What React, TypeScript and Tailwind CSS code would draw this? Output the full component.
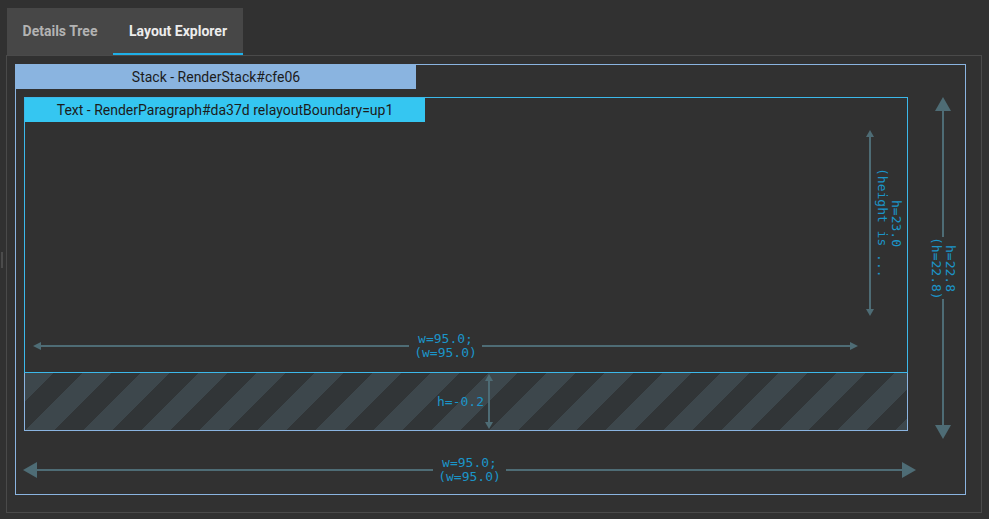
import React from "react";

const ARROW = "#4e6c75";

type Dir = "up" | "down" | "left" | "right";

function Tri({ dir, w, h }: { dir: Dir; w: number; h: number }) {
  // w = length along the arrow, h = base width
  const vertical = dir === "up" || dir === "down";
  const W = vertical ? h : w;
  const H = vertical ? w : h;
  const pts = {
    up: `${W / 2},0 ${W},${H} 0,${H}`,
    down: `0,0 ${W},0 ${W / 2},${H}`,
    left: `0,${H / 2} ${W},0 ${W},${H}`,
    right: `0,0 ${W},${H / 2} 0,${H}`,
  }[dir];
  return (
    <svg width={W} height={H} viewBox={`0 0 ${W} ${H}`} className="shrink-0 block">
      <polygon points={pts} fill={ARROW} />
    </svg>
  );
}

const measure =
  "font-['DejaVu_Sans_Mono',monospace] text-[13px] leading-[14px] text-[#1b95c9] text-center whitespace-nowrap";

function HArrow({ big, lines }: { big?: boolean; lines: string[] }) {
  const tw = big ? 14 : 8;
  const th = big ? 16 : 8;
  return (
    <div className="flex h-full w-full items-center">
      <Tri dir="left" w={tw} h={th} />
      <div className="h-[2px] flex-1 bg-[#4e6c75]" />
      <div className={`${measure} px-[5px]`}>
        {lines.map((l) => (
          <div key={l}>{l}</div>
        ))}
      </div>
      <div className="h-[2px] flex-1 bg-[#4e6c75]" />
      <Tri dir="right" w={tw} h={th} />
    </div>
  );
}

function VLine() {
  return (
    <div className="flex h-full flex-col items-center">
      <Tri dir="up" w={7} h={8} />
      <div className="w-[2px] flex-1 bg-[#4e6c75]" />
      <Tri dir="down" w={7} h={8} />
    </div>
  );
}

function BigVArrow() {
  return (
    <div className="flex h-full w-full flex-col items-center">
      <Tri dir="up" w={14} h={16} />
      <div className="w-[2px] flex-1 bg-[#4e6c75]" />
      <div className={`${measure} py-[5px] [writing-mode:vertical-rl]`}>
        <div>h=22.8</div>
        <div>(h=22.8)</div>
      </div>
      <div className="w-[2px] flex-1 bg-[#4e6c75]" />
      <Tri dir="down" w={14} h={16} />
    </div>
  );
}

export default function App() {
  return (
    <div className="flex h-[519px] w-[989px] overflow-hidden bg-[#313131] font-['Roboto',sans-serif]">
      {/* drag handle gutter */}
      <div className="flex w-[6px] shrink-0 items-center">
        <div className="ml-[1px] h-[16px] w-[2px] bg-[#4c4c4c]" />
      </div>

      <div className="flex flex-1 flex-col">
        {/* tabs */}
        <div className="ml-[1px] mt-[8px] flex h-[47px] w-fit bg-[#474747]">
          <div className="flex w-[106px] items-center justify-center text-[14px] font-bold text-[#b3b3b3]">
            Details Tree
          </div>
          <div className="flex w-[130px] items-center justify-center border-b-2 border-[#1fb0e8] pt-[2px] text-[14px] font-bold text-[#ececec]">
            Layout Explorer
          </div>
        </div>

        {/* panel */}
        <div className="h-[458px] w-[976px] border border-[#4a4a4a] p-[8px]">
          <div className="flex h-[431px] w-[951px] flex-col border border-[#8ab4e0]">
            <div className="flex h-[24px] w-[400px] items-center justify-center bg-[#8ab4e0] text-[14px] text-[#1c1c1c]">
              Stack - RenderStack#cfe06
            </div>

            <div className="flex flex-col pl-[8px] pt-[8px]">
              <div className="flex">
                {/* child area */}
                <div className="flex h-[334px] w-[884px] flex-col">
                  <div className="flex h-[276px] flex-col border border-[#3cb8ea]">
                    <div className="flex h-[24px] w-[400px] items-center justify-center bg-[#35c6f1] text-[14px] text-[#1c1c1c]">
                      Text - RenderParagraph#da37d relayoutBoundary=up1
                    </div>
                    <div className="flex flex-col pl-[8px] pt-[8px]">
                      <div className="flex h-[186px]">
                        <div className="w-[825px]" />
                        <div className="ml-[8px] w-[8px]">
                          <VLine />
                        </div>
                        <div className={`${measure} ml-[1px] self-center [writing-mode:vertical-rl]`}>
                          <div>h=23.0</div>
                          <div>(height is ...</div>
                        </div>
                      </div>
                      <div className="mt-[16px] h-[28px] w-[825px]">
                        <HArrow lines={["w=95.0;", "(w=95.0)"]} />
                      </div>
                    </div>
                  </div>
                  <div className="flex flex-1 border-x border-b border-[#8ab4e0] bg-[repeating-linear-gradient(135deg,#3d474c_0_20px,#313537_20px_41px)]">
                    <div className={`${measure} flex w-[460px] items-center justify-end pr-[1px]`}>
                      h=-0.2
                    </div>
                    <div className="w-[8px] py-[1px]">
                      <VLine />
                    </div>
                  </div>
                </div>

                {/* outer height arrow */}
                <div className="ml-[20px] h-[342px] w-[30px]">
                  <BigVArrow />
                </div>
              </div>

              {/* outer width arrow */}
              <div className="-ml-[1px] mt-[16px] h-[30px] w-[893px]">
                <HArrow big lines={["w=95.0;", "(w=95.0)"]} />
              </div>
            </div>
          </div>
        </div>
      </div>
    </div>
  );
}
